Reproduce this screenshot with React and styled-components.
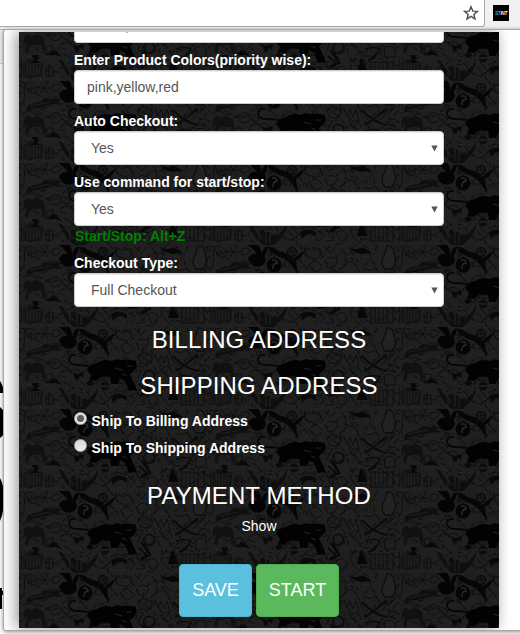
import React from 'react';
import styled, { createGlobalStyle } from 'styled-components';

const GlobalStyle = createGlobalStyle`
    * {
        box-sizing: border-box;
    }

    body {
        margin: 0;
        overflow: hidden;
        background-color: #ffffff;
        font-family: "Liberation Sans", Arial, sans-serif;
        font-size: 14px;
        line-height: 20px;
    }
`;

const Browser = styled.div`
    position: relative;
    width: 520px;
    height: 634px;
    overflow: hidden;
`;

const Toolbar = styled.div`
    display: flex;
    height: 30px;
    background-color: #f1f1f1;
    border-bottom: 1px solid #b8b8b8;
`;

const AddressBar = styled.div`
    display: flex;
    justify-content: flex-end;
    width: 485px;
    height: 27px;
    padding: 5px 5px 0 0;
    background-color: white;
    border: solid #a9a9a9;
    border-width: 0 1px 1px 0;
    border-radius: 0 0 3px 0;
`;

const Extension = styled.div`
    display: flex;
    align-items: center;
    justify-content: center;
    width: 16px;
    height: 16px;
    margin: 5px 0 0 8px;
    background-color: black;
    color: #e8e8e8;
    font-size: 5px;
    font-weight: bold;
    font-style: italic;
    letter-spacing: -0.5px;
    line-height: 5px;

    & span {
        color: #2a9fc4;
    }
`;

const Page = styled.div`
    height: 604px;
    border-top: 33px solid #f1f1f1;
`;

const PageArt = styled.svg`
    display: block;
`;

/* the popup floats over the page */
const Popup = styled.div`
    position: absolute;
    top: 29px;
    left: 3px;
    width: 524px;
    height: 602px;
    padding: 2px 0 2px 15px;
    overflow: hidden;
    background-color: white;
    border: 1px solid #a6a6a6;
    border-radius: 3px;
    box-shadow: 0 1px 4px rgba(0, 0, 0, 0.45);
`;

const Panel = styled.div`
    position: relative;
    width: 480px;
    height: 596px;
    background-color: #1c1c1c;
    box-shadow: -3px 0 14px rgba(0, 0, 0, 0.42);
`;

const Wallpaper = styled.svg`
    position: absolute;
    top: 0;
    left: 0;
`;

const Form = styled.div`
    position: relative;
    height: 596px;
    padding: 0 55px;
    overflow: hidden;
    color: white;
`;

const Label = styled.div`
    height: 20px;
    margin-top: 7px;
    font-weight: bold;
    white-space: nowrap;
`;

const Field = styled.div`
    display: flex;
    align-items: center;
    justify-content: space-between;
    height: 34px;
    padding: ${props => props.$select ? '0 5px 0 16px' : '0 12px'};
    background-color: white;
    border: 1px solid #cccccc;
    border-radius: 4px;
    box-shadow: inset 0 1px 1px rgba(0, 0, 0, 0.075);
    color: #555555;
`;

const CutField = styled.div`
    height: 11px;
    padding-left: 51px;
    background-color: white;
    border: 1px solid #cccccc;
    border-top: 0;
    border-radius: 0 0 4px 4px;

    & i {
        display: block;
        width: 2px;
        height: 1px;
        background-color: #8fc4e8;
    }
`;

const Hint = styled.div`
    height: 20px;
    padding-left: 1px;
    color: green;
    font-weight: bold;
`;

const Heading = styled.h3`
    height: 26px;
    margin: ${props => props.$top}px 0 0;
    font-size: 24px;
    font-weight: normal;
    letter-spacing: 0.08px;
    line-height: 26px;
    text-align: center;
`;

const RadioRow = styled.div`
    display: flex;
    gap: 5px;
    height: 20px;
    margin: ${props => props.$top}px 0 0 -0.5px;
    font-weight: bold;
`;

const Radio = styled.span`
    display: flex;
    align-items: center;
    justify-content: center;
    width: 13px;
    height: 13px;
    margin-top: 1px;
    border-radius: 50%;
    border: 1px solid #b4b4b4;
    background: linear-gradient(#d8d8d8, #ececec);

    & i {
        width: 7px;
        height: 7px;
        border-radius: 50%;
        background-color: #5c5c5c;
    }
`;

const Show = styled.div`
    margin-top: 7px;
    text-align: center;
`;

const Buttons = styled.div`
    display: flex;
    justify-content: center;
    gap: 4px;
    margin-top: 28px;
`;

const Button = styled.button`
    width: ${props => props.$width}px;
    height: 53px;
    padding: 0;
    background-color: ${props => props.$color};
    border: 1px solid ${props => props.$border};
    border-radius: 4px;
    color: white;
    font-family: inherit;
    font-size: 18px;
`;

// ONE TILE OF THE ANIMAL WALLPAPER, 189 x 82
const Tile = () => (
    <>
        <rect width="189" height="82" fill="#1f1f1f"/>

        {/* FINE LEAVES AND SCRIBBLES BETWEEN THE ANIMALS */}
        <g fill="none" stroke="#121212" strokeWidth="1.8" strokeDasharray="3 2 1 3 5 2 2 1">
            <path d="M0 4 Q12 12 24 3 T48 6 T72 3 T96 7 T120 3 T144 7 T168 3 T189 6"/>
            <path d="M0 13 Q9 6 21 15 T45 12 T69 15 T93 11 T117 15 T141 11 T165 16 T189 12"/>
            <path d="M0 22 Q14 29 25 20 T50 24 T75 20 T100 25 T125 20 T150 25 T189 21"/>
            <path d="M0 31 Q11 24 22 33 T44 30 T66 33 T88 29 T110 34 T132 30 T154 34 T189 30"/>
            <path d="M0 40 Q12 47 24 38 T48 42 T72 38 T96 43 T120 39 T144 43 T189 39"/>
            <path d="M0 49 Q10 42 20 51 T40 48 T60 52 T80 48 T100 52 T120 48 T140 52 T160 48 T189 51"/>
            <path d="M0 58 Q13 65 26 56 T52 60 T78 56 T104 61 T130 57 T156 61 T189 57"/>
            <path d="M0 67 Q12 60 24 69 T48 66 T72 70 T96 65 T120 69 T144 65 T189 68"/>
            <path d="M0 76 Q11 82 22 74 T44 78 T66 74 T88 78 T110 74 T132 78 T154 74 T189 77"/>
        </g>

        {/* SMALL FILLERS */}
        <g fill="none" stroke="#0d0d0d" strokeWidth="1">
            <path d="M1 1 L6 2 L5 20 L1 27 M7 2 C13 0 19 4 18 10 C14 15 9 12 8 6 Z M11 4 L16 10 M22 2 L29 12 M29 2 L22 12 M20 7 H32 M34 4 Q40 1 42 6 Q37 12 33 9 Z"/>
            <path d="M3 33 Q12 27 18 34 L24 32 M31 34 Q36 29 42 34 Q45 40 36 42 Q29 41 31 34 M44 33 L51 38 L46 44 M28 47 H34 V56 H27 Z M40 48 L47 51 M52 44 Q57 40 62 46"/>
            <path d="M53 31 Q47 27 48 23 M96 2 Q104 8 111 3 Q116 9 107 14 L98 11 Z M115 1 L122 8 L128 2 M118 15 Q124 9 130 16 L126 22 H119 Z M133 3 Q140 8 137 16 M101 20 L108 15 L115 22 L109 27 Z"/>
            <path d="M119 28 Q126 23 133 29 Q135 36 126 37 Q119 36 119 28 M122 29 L130 35 M136 27 L139 35 L142 28 L145 36 L148 28 L151 39 M140 40 L145 47 L151 39 M144 41 Q151 35 153 47"/>
            <path d="M155 23 Q161 28 167 23 L172 29 M176 23 Q183 19 187 26 L181 32 L175 28 M180 38 H188 M177 43 L188 45 M176 49 Q182 45 187 50 V58 H177 Z M126 46 Q130 40 136 46 V53 H127 Z"/>
            <path d="M2 61 Q4 69 2 78 M7 65 V76 M10 65 V76 M13 64 V76 M16 65 V76 M19 65 V76 M22 65 V76 M5 64 Q14 59 24 65 L22 77 H5 Z M27 68 H34 V77 H27 Z M30 65 V80"/>
            <path d="M39 70 Q45 66 50 73 M83 63 L91 72 L83 78 M80 50 H90 M80 53 H90 M91 66 Q98 61 106 66 M110 67 L116 73 L111 79 M117 68 H125 V78 H117 M128 70 Q136 64 139 73 L133 80"/>
            <path d="M141 64 Q149 57 154 64 V73 M163 63 V77 M167 63 V77 M171 64 V77 M175 63 V77 M179 64 V77 M161 63 H185 V78 H161 M143 70 L150 79 M155 77 Q161 73 165 79"/>
        </g>
        <g fill="none" stroke="#2c2c2c" strokeWidth="0.7" strokeDasharray="2 2 1 3">
            <path d="M2 30 Q20 24 38 30 T76 27 M98 28 Q118 18 139 22 T187 18 M0 59 Q22 54 48 61 T97 57 M117 61 Q139 54 162 60 T188 56 M5 80 H50 M82 79 H138 M139 12 H187 M94 15 H132"/>
            <path d="M7 24 L20 17 L35 21 M13 40 L21 46 M64 64 L72 72 M103 39 H113 M174 9 L185 16 M146 3 L159 11"/>
        </g>

        {/* CROCODILE */}
        <path d="M7 27 Q12 21 22 21 Q24 15 30 18 L43 18 L39 21 L45 23 L31 25 L24 29 L16 27 L8 31 Z" fill="#0f0f0f"/>
        <path d="M12 25 L31 21 M18 28 L38 23" stroke="#252525" strokeDasharray="2 1" fill="none"/>

        {/* HORSE AND CUP */}
        <path d="M5 39 Q8 32 13 37 Q18 32 25 39 L27 51 L24 55 L22 46 L11 46 L9 55 L6 53 L8 43 L4 47 Z" fill="#111111"/>
        <path d="M13 56 H20 L18 61 L21 64 H12 L15 61 Z M29 56 L33 51 L37 54 L35 50 L43 58 L37 56 Z" fill="#080808"/>

        {/* RABBIT */}
        <path d="M40 14 Q42 8 49 9 Q44 3 39 -1 L49 -1 Q53 2 53 9 Q60 12 57 18 Q51 25 43 19 Z M53 10 Q55 2 60 1 Q60 7 55 13 Z" fill="#040404"/>

        {/* YIN YANG */}
        <circle cx="66" cy="20" r="7.5" fill="#050505"/>
        <path d="M64 15 Q69 14 69 18 Q64 19 65 24" fill="none" stroke="#2c2c2c" strokeWidth="1.3"/>

        {/* LEAPING PUMA */}
        <path d="M60 2 Q65 1 70 6 Q80 7 85 14 Q92 8 96 6 Q96 10 88 16 L90 30 L84 21 Q78 13 71 12 L62 7 Z" fill="#060606"/>
        <circle cx="84" cy="7" r="4.5" fill="#1a1a1a" stroke="#080808" strokeWidth="1.3"/>
        <path d="M81 7 L88 6 M83 3 L86 11" stroke="#0b0b0b"/>

        {/* PANTHER */}
        <path d="M70 39 Q63 38 58 38 Q50 38 50 32 Q50 27 57 28" fill="none" stroke="#060606" strokeWidth="1.8"/>
        <path d="M68 43 Q70 37 78 36 Q84 31 93 34 Q97 31 102 33 Q110 32 117 34 L118 40 L114 45 L111 47 L114 54 L118 63 L110 64 L106 54 L101 51 L99 57 L92 57 L91 50 L83 49 L77 54 L70 53 L72 48 Z" fill="#020202"/>
        <path d="M96 41 L103 43 M108 39 L113 39 M103 47 L108 49" stroke="#242424"/>

        {/* DEER, DUCKS, BALLS */}
        <path d="M54 46 L59 47 L65 45 L64 51 L61 49 L57 54 Z M67 56 L72 52 L75 57 L70 59 Z M92 69 Q100 64 108 69 L108 74 L103 71 L98 72 L94 76 Z" fill="#090909"/>
        <circle cx="86" cy="59" r="4.5" fill="#0c0c0c"/>
        <path d="M82 59 H90" stroke="#2d2d2d"/>
        <circle cx="130" cy="49" r="5.5" fill="none" stroke="#0a0a0a" strokeWidth="1.3"/>

        {/* EAGLE */}
        <path d="M39 60 Q45 61 50 69 Q58 63 64 72 Q74 71 80 59 Q78 72 71 77 L66 82 H55 L48 76 Z" fill="#0e0e0e"/>
        <path d="M45 64 L55 76 M51 68 V78 M58 68 V80 M62 70 V80 M68 73 L76 65 M56 68 H64" stroke="#242424" fill="none"/>

        {/* STRIPES, HAMMERS, SHARK */}
        <path d="M120 57 L129 65 L122 69 M122 51 L131 64 L122 67 M125 52 L132 65" fill="none" stroke="#080808" strokeWidth="1.7"/>
        <path d="M154 29 Q166 42 179 44 M156 44 Q166 39 179 27" fill="none" stroke="#0a0a0a" strokeWidth="1.9"/>
        <path d="M157 50 Q167 47 172 50 Q167 58 160 61 Q169 60 168 54" fill="none" stroke="#0a0a0a" strokeWidth="1.6"/>
        <path d="M153 58 L160 73 L149 73 Z M140 2 Q150 6 154 2 L164 8 L153 9 L146 7 Z" fill="#070707"/>

        {/* PENGUIN */}
        <path d="M179 1 Q185 0 186 8 Q190 19 183 24 H177 Q171 18 177 8 Z" fill="#222222" stroke="#0b0b0b" strokeWidth="1.3"/>
    </>
);

// DROPDOWN ARROW
const Arrow = () => (
    <svg width="7" height="7" viewBox="0 0 7 7">
        <path d="M0.3 0.5 H6.7 L3.5 6.5 Z" fill="#555555"/>
    </svg>
);

const App = () => {

    return (
        <>
            <GlobalStyle/>
            <Browser>
                <Toolbar>
                    <AddressBar>
                        <svg width="16" height="16" viewBox="0 0 16 16">
                            <path d="M8 1.8 L9.8 6.1 L14.4 6.4 L10.9 9.4 L12 13.9 L8 11.4 L4 13.9 L5.1 9.4 L1.6 6.4 L6.2 6.1 Z" fill="none" stroke="#4d4d4d" strokeWidth="1.4"/>
                        </svg>
                    </AddressBar>
                    <Extension><span>ST</span>INT</Extension>
                </Toolbar>

                <Page>
                    <PageArt width="4" height="571" viewBox="0 63 4 571">
                        <path d="M0 63 H4" stroke="#a0a0a0"/>
                        <path d="M0 381 Q3 385 4 393 H0 Z M0 407 Q3 409 4 413 V433 Q3 436 0 438 Z M0 478 Q4 485 4 498 Q4 513 0 521 Z M0 588 H2 V591 H4 V595 H2 V609 H0 Z" fill="black"/>
                    </PageArt>
                </Page>

                <Popup>
                    <Panel>
                        <Wallpaper width="480" height="596">
                            <defs>
                                <pattern id="animals" width="189" height="82" y="-33" patternUnits="userSpaceOnUse">
                                    <Tile/>
                                </pattern>
                            </defs>
                            <rect width="480" height="596" fill="url(#animals)"/>
                        </Wallpaper>
                        <Form>
                            <CutField><i/></CutField>
                            <Label>Enter Product Colors(priority wise):</Label>
                            <Field>pink,yellow,red</Field>
                            <Label>Auto Checkout:</Label>
                            <Field $select>Yes <Arrow/></Field>
                            <Label>Use command for start/stop:</Label>
                            <Field $select>Yes <Arrow/></Field>
                            <Hint>Start/Stop: Alt+Z</Hint>
                            <Label>Checkout Type:</Label>
                            <Field $select>Full Checkout <Arrow/></Field>

                            <Heading $top={20}>BILLING ADDRESS</Heading>
                            <Heading $top={20}>SHIPPING ADDRESS</Heading>
                            <RadioRow $top={12}><Radio><i/></Radio>Ship To Billing Address</RadioRow>
                            <RadioRow $top={7}><Radio/>Ship To Shipping Address</RadioRow>

                            <Heading $top={25}>PAYMENT METHOD</Heading>
                            <Show>Show</Show>
                            <Buttons>
                                <Button $width={73} $color="#5bc0de" $border="#46b8da">SAVE</Button>
                                <Button $width={83} $color="#5cb85c" $border="#4cae4c">START</Button>
                            </Buttons>
                        </Form>
                    </Panel>
                </Popup>
            </Browser>
        </>
    )
}

export default App
